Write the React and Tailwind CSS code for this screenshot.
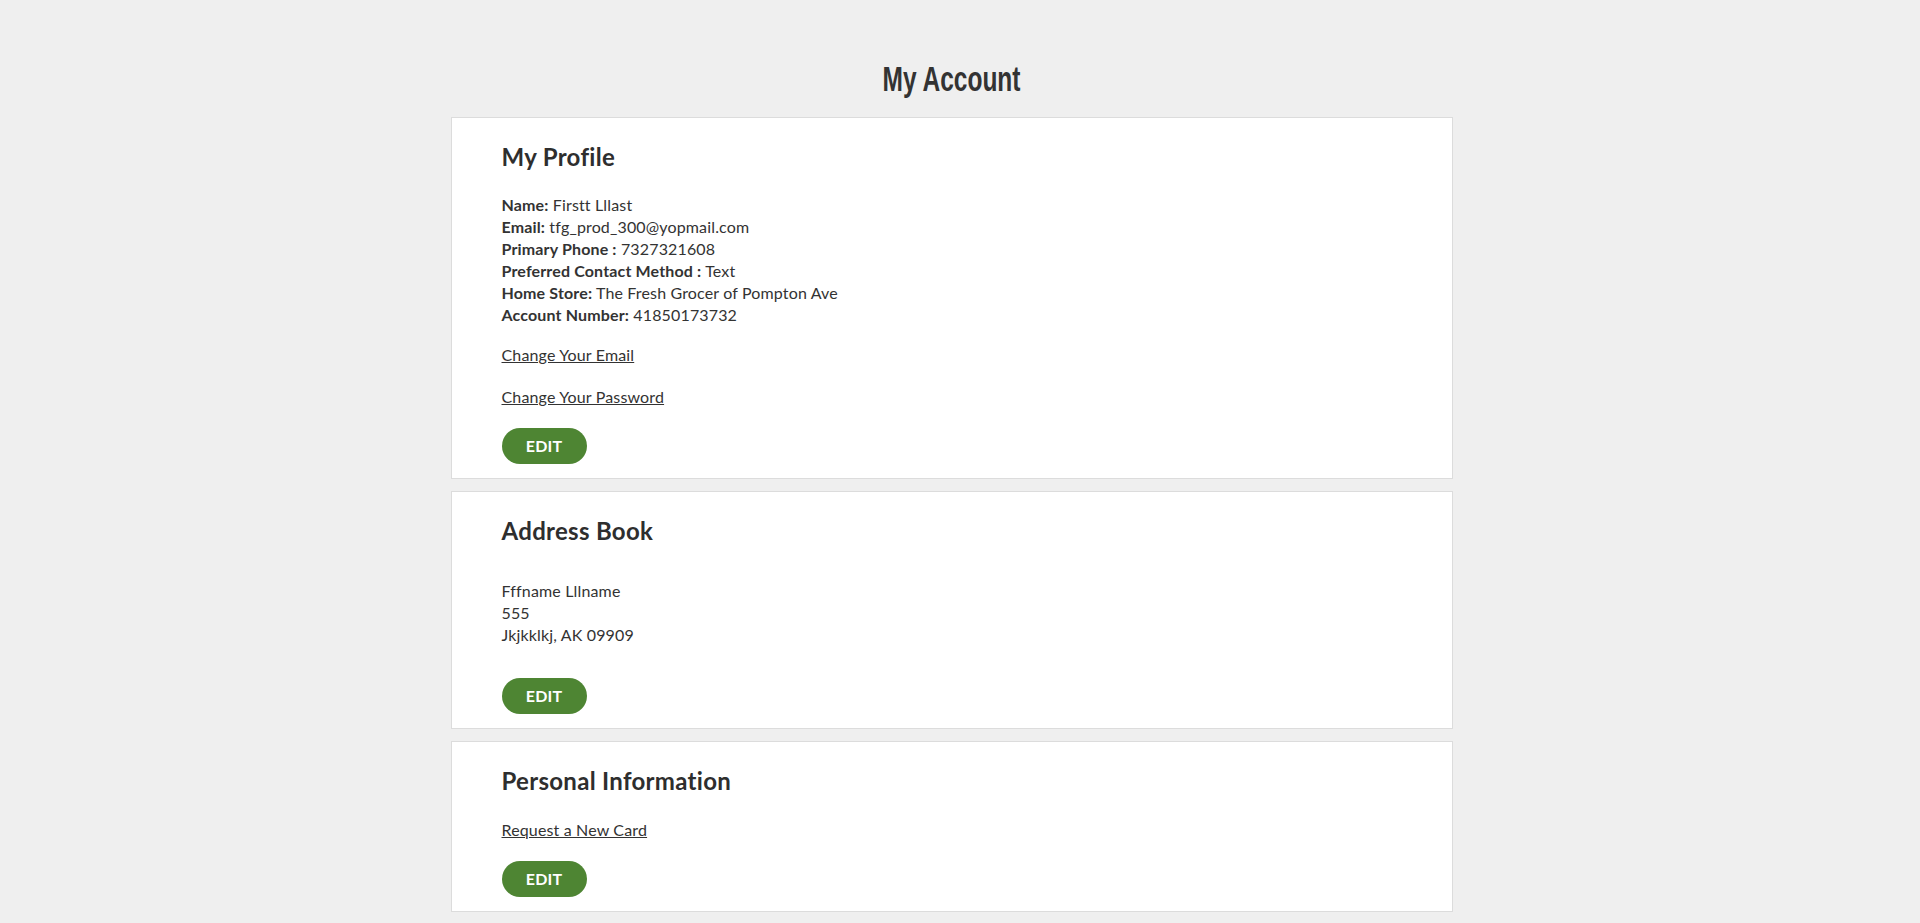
import React from 'react';

const profile = [
    ['Name:', 'Firstt Lllast'],
    ['Email:', 'tfg_prod_300@yopmail.com'],
    ['Primary Phone :', '7327321608'],
    ['Preferred Contact Method :', 'Text'],
    ['Home Store:', 'The Fresh Grocer of Pompton Ave'],
    ['Account Number:', '41850173732'],
];

function EditButton() {
    return (
        <button className="w-[85px] h-9 rounded-full bg-[#4e8533] text-white font-bold text-[16px] leading-none uppercase tracking-[0.2px]">
            Edit
        </button>
    );
}

function Card({ title, children }) {
    return (
        <section className="bg-white border border-[#dcdcdc] pt-[25px] pb-[14px] pl-[50px] pr-[50px]">
            <h2 className="text-[24px] leading-[28px] font-bold text-[#2e2e2e] tracking-[0.3px]">{title}</h2>
            {children}
        </section>
    );
}

export default function App() {
    return (
        <div className="min-h-screen bg-[#efefef] text-[#333] pr-[17px] font-['Lato','Liberation_Sans',sans-serif] text-[16px] leading-[22px] tracking-[0.15px]">
            <div className="w-[1002px] mx-auto pt-[62px]">
                {/* Page title */}
                <div className="text-center mb-[21px] h-[34px]">
                    <h1 className="inline-block scale-x-[0.7] origin-center text-[35px] leading-[34px] font-bold text-[#333] tracking-normal font-['Liberation_Sans',sans-serif]">
                        My Account
                    </h1>
                </div>

                <div className="flex flex-col gap-3">
                    {/* My Profile */}
                    <Card title="My Profile">
                        <div className="mt-[23px]">
                            {profile.map(([label, value]) => (
                                <p key={label}>
                                    <span className="font-bold">{label}</span> {value}
                                </p>
                            ))}
                        </div>
                        <p className="mt-[18px]">
                            <a href="#" className="underline">Change Your Email</a>
                        </p>
                        <p className="mt-5">
                            <a href="#" className="underline">Change Your Password</a>
                        </p>
                        <div className="mt-5">
                            <EditButton />
                        </div>
                    </Card>

                    {/* Address Book */}
                    <Card title="Address Book">
                        <div className="mt-[35px]">
                            <p>Fffname Lllname</p>
                            <p>555</p>
                            <p>Jkjkklkj, AK 09909</p>
                        </div>
                        <div className="mt-8">
                            <EditButton />
                        </div>
                    </Card>

                    {/* Personal Information */}
                    <Card title="Personal Information">
                        <p className="mt-6">
                            <a href="#" className="underline">Request a New Card</a>
                        </p>
                        <div className="mt-5">
                            <EditButton />
                        </div>
                    </Card>
                </div>
            </div>
        </div>
    );
}
